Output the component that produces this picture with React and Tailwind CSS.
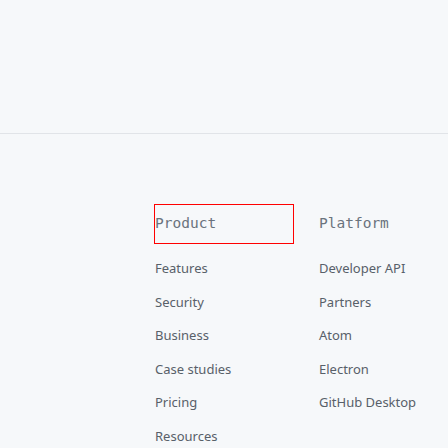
export default function App() {
  const product = ["Features", "Security", "Business", "Case studies", "Pricing", "Resources"];
  const platform = ["Developer API", "Partners", "Atom", "Electron", "GitHub Desktop"];
  const List = ({ items }) => (
    <ul className="mt-[8px] flex flex-col">
      {items.map((t) => (
        <li key={t} className="h-[33.6px] flex items-center pl-px text-[13px] text-[#586069] font-['Noto_Sans',sans-serif]">
          {t}
        </li>
      ))}
    </ul>
  );
  return (
    <div className="w-full h-[448px] bg-[#f6f8fa] overflow-hidden">
      <div className="h-[134px] border-b border-[#e1e4e8]" />
      <div className="pt-[70px] pl-[154px] grid grid-cols-[164px_164px]">
        <div className="flex flex-col">
          <div className="h-[40px] w-[140px] flex items-center border border-[#ff0000] text-[14.5px] text-[#6a737d] font-['DejaVu_Sans_Mono',monospace]">
            Product
          </div>
          <List items={product} />
        </div>
        <div className="flex flex-col">
          <div className="h-[40px] w-[140px] flex items-center border border-transparent text-[14.5px] text-[#6a737d] font-['DejaVu_Sans_Mono',monospace]">
            Platform
          </div>
          <List items={platform} />
        </div>
      </div>
    </div>
  );
}
